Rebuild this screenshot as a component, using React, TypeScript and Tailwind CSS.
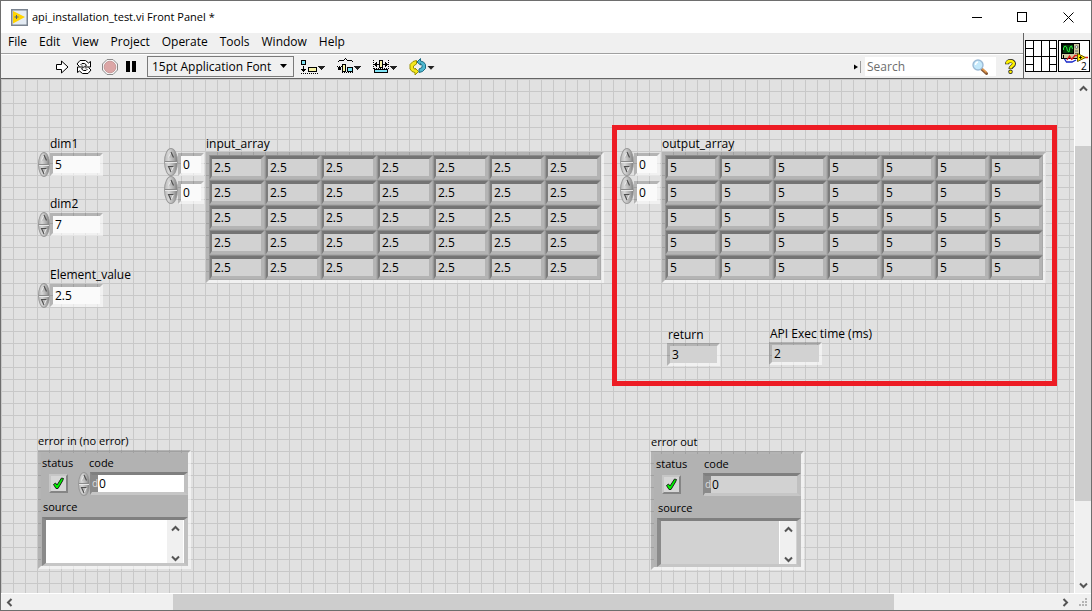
import React from "react";

type Tone = "control" | "indicator";

const PANEL_BEVEL =
  "border-[3px] border-t-black/20 border-l-black/20 border-r-white/55 border-b-white/55 bg-clip-padding";

function VerticalSpinner({ name, size }: { name: string; size: string }) {
  return (
    <div
      className={`${size} flex shrink-0 flex-col overflow-hidden rounded-[50%] border border-[#999] bg-[linear-gradient(to_right,#bcbcbc,#d6d6d6_30%,#a9a9a9_75%,#7f7f7f)]`}
    >
      <button type="button" aria-label={`Increment ${name}`} className="flex flex-1 items-center justify-center border-b border-[#8a8a8a]">
        <svg className="h-2 w-2" viewBox="0 0 8 8">
          <path d="M4 1 L6.5 6.5 H1.5 Z" fill="#b8b8b8" />
          <path d="M1.5 6.5 L4 1" stroke="#ececec" />
          <path d="M4 1 L6.5 6.5" stroke="#4f4f4f" strokeWidth="1.2" />
        </svg>
      </button>
      <button type="button" aria-label={`Decrement ${name}`} className="flex flex-1 items-center justify-center border-t border-[#e8e8e8]">
        <svg className="h-2 w-2" viewBox="0 0 8 8">
          <path d="M1.5 1.5 H6.5 L4 7 Z" fill="#b8b8b8" />
          <path d="M6.5 1.5 L4 7" stroke="#ececec" />
          <path d="M6.5 1.5 H1.5 L4 7" stroke="#4f4f4f" strokeWidth="1.1" fill="none" />
        </svg>
      </button>
    </div>
  );
}

function NumericField({ id, label, value, place }: { id: string; label: string; value: string; place: string }) {
  return (
    <div className={`absolute ${place}`}>
      <label htmlFor={id} className="block pl-3 leading-[17px] whitespace-nowrap">
        {label}
      </label>
      <div className="flex items-center">
        <VerticalSpinner name={label} size="h-[25px] w-3" />
        <input id={id} defaultValue={value} className={`h-[23px] w-[53px] bg-[#fafafa] pl-0.5 outline-none ${PANEL_BEVEL}`} />
      </div>
    </div>
  );
}

function NumericIndicator({ label, value, place }: { label: string; value: string; place: string }) {
  return (
    <div className={`absolute ${place}`}>
      <div className="pl-px leading-[17px] whitespace-nowrap">{label}</div>
      <output aria-label={label} className={`block h-[23px] w-[53px] bg-[#d2d2d2] pl-0.5 leading-[17px] ${PANEL_BEVEL}`}>
        {value}
      </output>
    </div>
  );
}

function ArrayView({
  name,
  value,
  cell,
  place,
}: {
  name: string;
  value: string;
  cell: string;
  place: string;
}) {
  const rows = [0, 1, 2, 3, 4];
  const columns = [0, 1, 2, 3, 4, 5, 6];
  return (
    <div className={`absolute flex gap-0.5 ${place}`}>
      <div className="flex flex-col pt-[13px]">
        {["row index", "column index"].map((axis) => (
          <div key={axis} className="flex h-7 items-end">
            <VerticalSpinner name={`${name} ${axis}`} size="h-7 w-[14px]" />
            <input
              aria-label={`${name} ${axis}`}
              defaultValue="0"
              className={`h-[23px] w-[26px] bg-[#fafafa] pl-0.5 outline-none ${PANEL_BEVEL}`}
            />
          </div>
        ))}
      </div>
      <table className="border-separate border-spacing-0">
        <caption className="text-left leading-[17px]">{name}</caption>
        <tbody className="block border-[3px] border-t-black/20 border-r-white/55 border-b-white/55 border-l-black/20">
          {rows.map((row) => (
            <tr key={row} className="flex">
              {columns.map((column) => (
                <td
                  key={column}
                  className={`${cell} box-border h-[25px] border border-t-[#8c8c8c] border-r-[#a9a9a9] border-b-[#a9a9a9] border-l-[#969696] bg-[#b4b4b4] p-0`}
                >
                  <div className="h-[23px] border-t-[3px] border-r-[3px] border-b-[3px] border-l-2 border-t-[#747474] border-r-[#b4b4b4] border-b-[#b4b4b4] border-l-[#7c7c7c] bg-[#d2d2d2] pl-0.5 leading-[17px]">
                    {value}
                  </div>
                </td>
              ))}
            </tr>
          ))}
        </tbody>
      </table>
    </div>
  );
}

function CheckMark() {
  return (
    <svg className="h-[15px] w-[15px]" viewBox="0 0 15 15">
      <path d="M2.5 8.5 L4.5 7 L6 9 L10.5 2 L12.5 2.5 L11.5 5 L7 12.5 L5 12.5 Z" fill="#00f000" stroke="#111" strokeWidth="0.9" />
    </svg>
  );
}

function Chevron({ turn }: { turn: string }) {
  return (
    <svg className={`h-[9px] w-[9px] ${turn}`} viewBox="0 0 9 9" fill="none">
      <path d="M1 6.5 L4.5 3 L8 6.5" stroke="#555" strokeWidth="2" />
    </svg>
  );
}

function ErrorCluster({ title, tone, place }: { title: string; tone: Tone; place: string }) {
  const control = tone === "control";
  const id = control ? "error-in" : "error-out";
  const fill = control ? "bg-white" : "bg-[#d2d2d2]";
  const inset = "border-y-[3px] border-r-4 border-t-[#7f7f7f] border-l-[#8a8a8a] border-r-[#c0c0c0] border-b-[#c6c6c6]";
  const badge =
    "flex h-[19px] w-[19px] items-center justify-center border-2 border-t-[#c6c6c6] border-l-[#c6c6c6] border-r-[#858585] border-b-[#858585] bg-[#d6d6d6]";
  return (
    <section aria-label={title} className={`absolute w-[153px] ${place}`}>
      <h2 className="pb-px text-[11px] leading-4 whitespace-nowrap">{title}</h2>
      <div className="border-[3px] border-t-black/20 border-r-white/55 border-b-white/55 border-l-black/20 bg-[#b2b2b2] bg-clip-padding">
        <div className="flex leading-[19px]">
          <span className={`w-12 text-[11px] ${control ? "pl-px" : "pl-0.5"}`}>status</span>
          <label htmlFor={`${id}-code`} className={`text-[11px] ${control ? "" : "pl-0.5"}`}>
            code
          </label>
        </div>
        <div className="flex h-[23px] items-center">
          <div className="flex w-[49px] shrink-0 items-center justify-between pl-2">
            {control ? (
              <button type="button" aria-label="status" aria-pressed="false" className={badge}>
                <CheckMark />
              </button>
            ) : (
              <span role="img" aria-label="no error" className={badge}>
                <CheckMark />
              </span>
            )}
            {control && <VerticalSpinner name="code" size="h-6 w-3" />}
          </div>
          <div className={`flex h-[23px] flex-1 border-l-2 ${inset} ${fill}`}>
            <span className="w-[6px] bg-[#8a8a8a] text-[10px] leading-[17px] text-[#dcdcdc]">d</span>
            <input id={`${id}-code`} defaultValue="0" readOnly={!control} className="w-full min-w-0 pl-px outline-none" />
          </div>
        </div>
        <div className={control ? "pl-px" : "pl-[3px]"}>
          <label htmlFor={`${id}-source`} className="block pt-px pl-px text-[11px] leading-[21px]">
            source
          </label>
          <div className={`flex h-[49px] border-l-4 ${inset} ${fill}`}>
            <textarea id={`${id}-source`} readOnly={!control} className="min-w-0 flex-1 resize-none outline-none" />
            <div className="mr-px flex w-[17px] flex-col items-center justify-between border-l border-white bg-[#f0f0f0] pt-1">
              <Chevron turn="" />
              <Chevron turn="rotate-180" />
            </div>
          </div>
        </div>
      </div>
    </section>
  );
}

function DropArrow() {
  return <path d="M17 8 H24 V9 H23 V10 H22 V11 H21 V12 H20 V11 H19 V10 H18 V9 H17 Z" fill="#222" />;
}

function AlignIcon() {
  return (
    <svg className="h-[18px] w-6" viewBox="0 0 24 18" shapeRendering="crispEdges">
      <rect x="0.5" y="2.5" width="4" height="4" fill="#7fe3f5" stroke="#000" />
      <path d="M2 8 H3 V11 H5 V12 H4 V13 H3 V14 H2 V13 H1 V12 H0 V11 H2 Z" fill="#000" />
      <path d="M0 15.5 H17" stroke="#000" strokeDasharray="1 1" />
      <rect x="7.5" y="9.5" width="8" height="4" fill="#f7f3a6" stroke="#000" />
      <DropArrow />
    </svg>
  );
}

function DistributeIcon() {
  return (
    <svg className="h-[18px] w-6" viewBox="0 0 24 18" shapeRendering="crispEdges">
      <path d="M1 4 V3 H2 V2 H7 V1 H8 V0 H9 V1 H10 V2 H15 V3 H16 V4 H15 V3 H10 V2 H9 V1 H8 V2 H7 V3 H2 V4 Z" fill="#000" />
      <rect x="1" y="9" width="3" height="3" fill="#000" />
      <rect x="5.5" y="6.5" width="3" height="7" fill="#f7f3a6" stroke="#000" />
      <rect x="10.5" y="9.5" width="5" height="4" fill="#7fe3f5" stroke="#000" />
      <path d="M0 8.5 H5 M5 14.5 H17" stroke="#000" strokeDasharray="1 1" />
      <DropArrow />
    </svg>
  );
}

function ResizeIcon() {
  return (
    <svg className="h-[18px] w-6" viewBox="0 0 24 18" shapeRendering="crispEdges">
      <path d="M0.5 2 V12 M15.5 2 V12" stroke="#000" strokeDasharray="1 1" />
      <path d="M1 6 H2 V5 H3 V4 H4 V6 H6 V7 H4 V9 H3 V8 H2 V7 H1 Z M15 6 H14 V5 H13 V4 H12 V6 H10 V7 H12 V9 H13 V8 H14 V7 H15 Z" fill="#000" />
      <rect x="6.5" y="2.5" width="3" height="7" fill="#f7f3a6" stroke="#000" />
      <path d="M1 10.5 H15" stroke="#000" strokeDasharray="1 1" />
      <rect x="1.5" y="11.5" width="13" height="3" fill="#7fe3f5" stroke="#000" />
      <DropArrow />
    </svg>
  );
}

function ReorderIcon() {
  return (
    <svg className="h-[18px] w-[26px]" viewBox="0 0 26 18">
      <path d="M7.5 2.5 L4 3.5 L1 6.5 V11 L3 13.5 L6 14.5 V17 L9.5 13.5 L6 10 V11.5 L4.5 10 V8 L7.5 6 Z" fill="#f4e81e" stroke="#9a9000" />
      <path d="M10 14.5 L13.5 13.5 L16.5 10.5 V6.5 L14.5 4 L11.5 3 V0.5 L8 4 L11.5 7 V5.5 L13 7.5 V9.5 L10 11 Z" fill="#4eb8d0" stroke="#1c6b82" />
      <path d="M18.5 8 H25.5 L22 11.8 Z" fill="#222" />
    </svg>
  );
}

function RepeatRunIcon() {
  return (
    <svg className="h-4 w-4" viewBox="0 0 16 16" fill="#fff" stroke="#000">
      <path d="M3.5 7.5 L1 5 L4 1.5 H9.5 L12.5 4 L14.5 2.5 V8 H8.5 L10.5 6 L8.5 4.5 H6 L5 5.5 L6 6.5" />
      <path d="M12.5 8.5 L15 11 L12 14.5 H6.5 L3.5 12 L1.5 13.5 V8 H7.5 L5.5 10 L7.5 11.5 H10 L11 10.5 L10 9.5" />
    </svg>
  );
}

function PanelIcon() {
  return (
    <svg className="h-[17px] w-[17px]" viewBox="0 0 17 17">
      <rect x="0.75" y="0.75" width="15.5" height="15.5" fill="#e4ebf3" stroke="#7b8490" strokeWidth="1.5" />
      <path d="M2 2 L14 8 L2 14.5 Z" fill="#ffd400" />
      <path d="M3.5 8 H7.5 M5.5 6 V10" stroke="#4c5f74" />
    </svg>
  );
}

function ConnectorPane() {
  return (
    <svg className="h-8 w-8" viewBox="0 0 32 32" fill="#fff" stroke="#000" shapeRendering="crispEdges">
      <rect x="0.5" y="0.5" width="31" height="31" />
      <path d="M8.5 0 V32 M16.5 0 V32 M24.5 0 V32 M0 8.5 H8 M0 16.5 H32 M0 24.5 H8 M24 8.5 H32 M24 24.5 H32" />
    </svg>
  );
}

function ViIcon() {
  return (
    <svg className="h-8 w-8" viewBox="0 0 32 32">
      <rect x="0.5" y="0.5" width="31" height="31" fill="#fff" stroke="#000" />
      <rect x="3.5" y="3.5" width="18" height="15" fill="#cfcba0" stroke="#000" />
      <rect x="4.5" y="4.5" width="11" height="9" fill="#05380a" stroke="#000" />
      <path d="M5.5 10 V8 L7 6 L8.5 7 L9.5 11 L11 12 L12 7 L13.5 6 L14.5 9" stroke="#28f03c" fill="none" />
      <circle cx="18.5" cy="7" r="1.4" fill="#eee" stroke="#555" strokeWidth="0.8" />
      <path d="M17 11 H20 M17 13.5 H20" stroke="#666" />
      <path d="M5.5 15 V18.5 H7" stroke="#000" fill="none" />
      <path d="M6.5 19 L8.5 22 H14 L18 20" stroke="#1526c8" fill="none" strokeWidth="1.3" />
      <path d="M9 20 L11.5 16 L14 20 M14 19 L17 15.5 H20 M27 17.5 H30" stroke="#e01818" fill="none" strokeWidth="1.3" />
      <path d="M19.5 13.5 L27.5 17.5 L19.5 21.5 Z" fill="#ffe600" stroke="#6b5c00" />
      <path d="M21 17.5 H24 M22.5 16 V19" stroke="#000" strokeWidth="0.8" />
      <text x="23" y="30" fontSize="10" fontFamily="Open Sans, sans-serif" fill="#000">
        2
      </text>
    </svg>
  );
}

export default function App() {
  const toolButton = "flex h-5 items-center justify-center";
  return (
    <div className="flex h-screen w-full flex-col border-r border-b border-l border-[#6e6e6e] bg-[#f0f0f0] font-['Open_Sans','Noto_Sans',sans-serif] text-[12px] text-black">
      <header className="flex h-[33px] shrink-0 items-center border-t border-[#6e6e6e] bg-white pl-2.5">
        <PanelIcon />
        <h1 className="flex-1 pl-1 text-[11px] leading-4">api_installation_test.vi Front Panel *</h1>
        <div className="flex self-stretch">
          <button type="button" aria-label="Minimize" className="flex w-[46px] items-center justify-center">
            <svg className="h-[11px] w-[11px]" viewBox="0 0 11 11"><path d="M0 5.5 H10" stroke="#000" /></svg>
          </button>
          <button type="button" aria-label="Maximize" className="flex w-[45px] items-center justify-center">
            <svg className="h-[11px] w-[11px]" viewBox="0 0 11 11"><rect x="0.5" y="0.5" width="9" height="9" fill="none" stroke="#000" /></svg>
          </button>
          <button type="button" aria-label="Close" className="flex w-[46px] items-center justify-center">
            <svg className="h-[11px] w-[11px]" viewBox="0 0 11 11"><path d="M0.5 0.5 L10.5 10.5 M10.5 0.5 L0.5 10.5" stroke="#000" /></svg>
          </button>
        </div>
      </header>

      <div className="flex h-[46px] shrink-0 border-b border-[#646464] pr-px">
        <div className="flex min-w-0 flex-1 flex-col">
          <nav className="flex h-[21px] items-start gap-3 border-b border-[#a0a0a0] pl-[7px]">
            {["File", "Edit", "View", "Project", "Operate", "Tools", "Window", "Help"].map((item) => (
              <button key={item} type="button" className="leading-[18px]">
                {item}
              </button>
            ))}
          </nav>
          <div className="flex flex-1 items-center border-t border-white pl-[55px]">
            <button type="button" aria-label="Run" className={toolButton}>
              <svg className="h-[14px] w-[13px]" viewBox="0 0 13 14">
                <path d="M0.5 4.5 H5.5 V1 L12 7 L5.5 13 V9.5 H0.5 Z" fill="#fff" stroke="#000" />
              </svg>
            </button>
            <button type="button" aria-label="Run continuously" className={`${toolButton} ml-[7px]`}>
              <RepeatRunIcon />
            </button>
            <button type="button" aria-label="Abort" className={`${toolButton} ml-2.5`}>
              <svg className="h-4 w-4" viewBox="0 0 16 16">
                <path d="M5 0.5 H11 L15.5 5 V11 L11 15.5 H5 L0.5 11 V5 Z" fill="#f5f5f5" stroke="#8a8a8a" />
                <circle cx="8" cy="8" r="5.8" fill="#dca6a6" stroke="#c99a9a" />
              </svg>
            </button>
            <button type="button" aria-label="Pause" className={`${toolButton} ml-2`}>
              <svg className="h-[11px] w-[10px]" viewBox="0 0 10 11"><path d="M0 0 H4 V11 H0 Z M6 0 H10 V11 H6 Z" /></svg>
            </button>
            <div className="relative ml-[11px]">
              <select aria-label="Text settings" className="h-[21px] w-[147px] appearance-none border border-[#7a7a7a] bg-[#f0f0f0] pl-1 leading-4">
                <option>15pt Application Font</option>
              </select>
              <svg className="pointer-events-none absolute top-2 right-[7px] h-1 w-[7px]" viewBox="0 0 7 4"><path d="M0 0 H7 L3.5 4 Z" /></svg>
            </div>
            <div className="ml-[7px] flex gap-3">
              <button type="button" aria-label="Align objects" className={toolButton}><AlignIcon /></button>
              <button type="button" aria-label="Distribute objects" className={toolButton}><DistributeIcon /></button>
              <button type="button" aria-label="Resize objects" className={toolButton}><ResizeIcon /></button>
              <button type="button" aria-label="Reorder" className={toolButton}><ReorderIcon /></button>
            </div>
            <div className="ml-auto flex items-center pr-[7px]">
              <svg className="h-3 w-[7px]" viewBox="0 0 7 12"><path d="M0 3.5 L4 6 L0 8.5 Z" /><path d="M6.5 0 V12" stroke="#9a9a9a" /></svg>
              <div className="ml-1 flex h-[19px] w-[131px] items-center bg-white pr-2">
                <input aria-label="Search" placeholder="Search" className="w-full min-w-0 pl-0.5 outline-none placeholder:text-[#6d6d6d]" />
                <svg className="h-4 w-4 shrink-0" viewBox="0 0 16 16">
                  <path d="M9.5 10 L14.5 14.5" stroke="#8a5a36" strokeWidth="3" strokeLinecap="round" />
                  <path d="M10 9.5 L14.5 13.5" stroke="#e59a4a" strokeWidth="1.6" />
                  <circle cx="6" cy="6" r="5" fill="#c4e9fb" stroke="#9dbbd6" strokeWidth="1.4" />
                  <path d="M3.5 6 C3.5 4 4.5 3.2 6 3" stroke="#fff" strokeWidth="1.4" fill="none" />
                </svg>
              </div>
              <button type="button" aria-label="Help" className="ml-[9px]">
                <svg className="h-[15px] w-[11px]" viewBox="0 0 11 15" fill="none">
                  <path d="M2 5.2 C2 1 9 1 9 4.8 C9 7.2 5.5 7 5.5 10" stroke="#222" strokeWidth="4" />
                  <circle cx="5.5" cy="12.8" r="2.2" fill="#222" />
                  <path d="M2 4.8 C2 1.2 8.8 1.2 8.8 4.7 C8.8 7 5.5 7 5.5 9.4" stroke="#fff200" strokeWidth="2.6" />
                  <circle cx="5.5" cy="12.8" r="1.4" fill="#fff200" />
                </svg>
              </button>
            </div>
          </div>
        </div>
        <div className="flex items-center gap-px border-l border-[#646464] pl-px">
          <ConnectorPane />
          <ViIcon />
        </div>
      </div>

      <div className="flex min-h-0 flex-1">
        <main className="relative min-w-0 flex-1 overflow-hidden bg-[#e1e1e1] bg-[linear-gradient(to_right,#c8c8c8_1px,transparent_1px),linear-gradient(to_bottom,#c8c8c8_1px,transparent_1px)] bg-[size:12px_12px]">
          <NumericField id="dim1" label="dim1" value="5" place="left-[37px] top-[56px]" />
          <NumericField id="dim2" label="dim2" value="7" place="left-[37px] top-[116px]" />
          <NumericField id="element-value" label="Element_value" value="2.5" place="left-[37px] top-[187px]" />
          <ArrayView name="input_array" value="2.5" cell="w-[56px]" place="left-[163px] top-[56px]" />
          <ArrayView name="output_array" value="5" cell="w-[54px]" place="left-[619px] top-[56px]" />
          <NumericIndicator label="return" value="3" place="left-[666px] top-[247px]" />
          <NumericIndicator label="API Exec time (ms)" value="2" place="left-[768px] top-[246px]" />
          <ErrorCluster title="error in (no error)" tone="control" place="left-[37px] top-[354px]" />
          <ErrorCluster title="error out" tone="indicator" place="left-[650px] top-[355px]" />
          <div className="pointer-events-none absolute top-[46px] left-[611px] h-[261px] w-[445px] border-[5px] border-[#ed1c24]" />
        </main>
        <div className="flex w-[17px] shrink-0 flex-col items-center border-l border-white">
          <div className="flex h-[18px] shrink-0 items-center"><Chevron turn="" /></div>
          <div className="flex w-full flex-1 flex-col">
            <div className="grow-[49]" />
            <div className="grow-[355] bg-[#cdcdcd]" />
            <div className="grow-[76]" />
          </div>
          <div className="flex h-4 shrink-0 items-center"><Chevron turn="rotate-180" /></div>
        </div>
      </div>

      <div className="flex h-[17px] shrink-0 items-center border-t border-white">
        <div className="flex w-[17px] justify-center"><Chevron turn="-rotate-90" /></div>
        <div className="flex flex-1 self-stretch">
          <div className="grow-[155]" />
          <div className="grow-[721] bg-[#cdcdcd]" />
          <div className="grow-[163]" />
        </div>
        <div className="flex w-4 justify-center"><Chevron turn="rotate-90" /></div>
        <svg className="ml-1 h-3 w-3.5" viewBox="0 0 14 12" fill="#b4b4b4">
          <path d="M8 2 H10 V4 H8 Z M5 5 H7 V7 H5 Z M8 5 H10 V7 H8 Z M2 8 H4 V10 H2 Z M5 8 H7 V10 H5 Z M8 8 H10 V10 H8 Z" />
        </svg>
      </div>
    </div>
  );
}
